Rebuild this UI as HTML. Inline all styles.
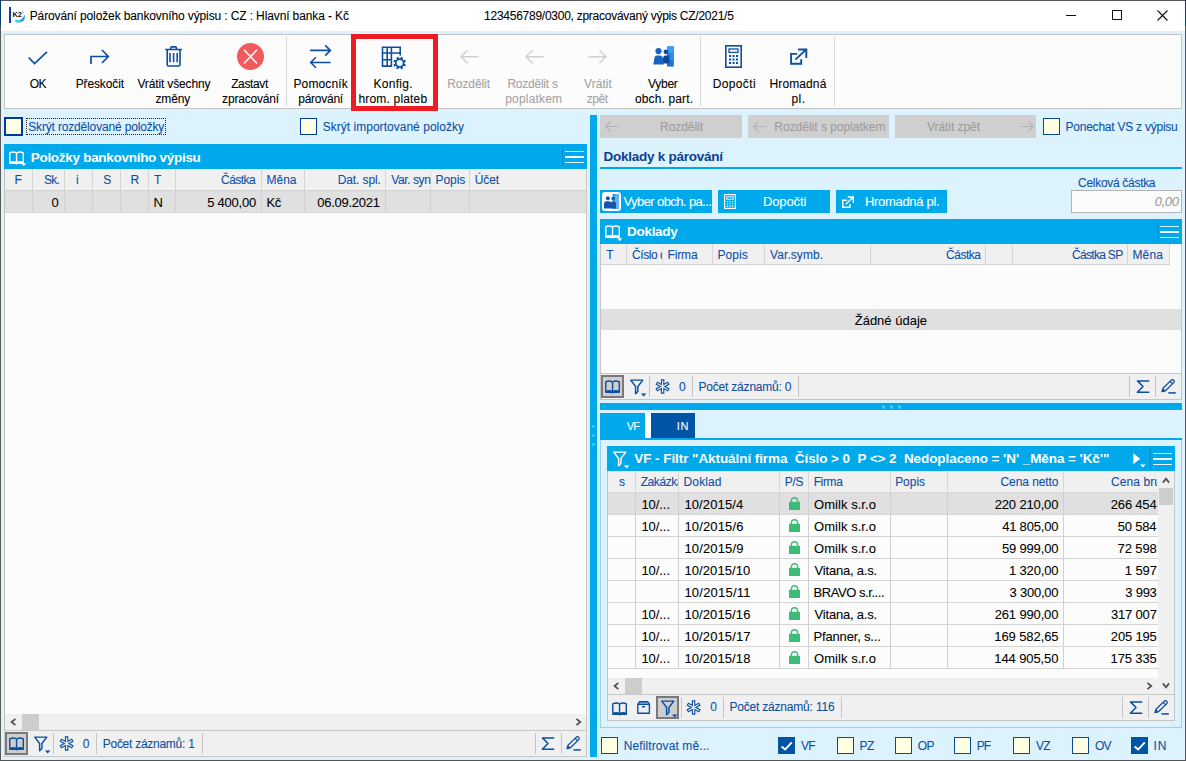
<!DOCTYPE html>
<html lang="cs"><head><meta charset="utf-8"><title>Párování položek bankovního výpisu</title>
<style>
*{box-sizing:border-box;margin:0;padding:0}
html,body{width:1186px;height:761px;overflow:hidden;background:#dcf3fd;font-family:"Liberation Sans",sans-serif;font-size:12px;color:#000}
.a{position:absolute}
.t{position:absolute;white-space:nowrap;-webkit-text-stroke:0.08px currentColor}
.nv{color:#1b3c98}
.wh{color:#fff}
.dis{color:#a3a3a3}
svg{position:absolute;overflow:visible}
</style></head><body>
<!-- title bar -->
<div class="a" style="left:0px;top:0px;width:1186px;height:31px;background:#fff;"></div>
<div class="a" style="left:9px;top:7px;width:2px;height:16px;background:#0c40a0;"></div>
<svg style="left:12px;top:8px" width="14" height="15" viewBox="0 0 14 15"><path d="M3 11.5 Q8 13.5 11 9.5 L12.8 6.5 Q13.6 10 11.6 12.8 Q8.5 15.5 4.6 14.2 Z" fill="#2a9cec"/><path d="M2.6 12.8 Q6.5 13 9.6 11 Q8.6 14.6 4.6 14.4 Z" fill="#35e0d2"/><path d="M10 1.2 L11.6 4.6 L11 5.6Z" fill="#4a7de0"/><text x="0.4" y="9.4" font-size="6.4" font-weight="bold" font-family="Liberation Sans,sans-serif" fill="#111" textLength="9.4" lengthAdjust="spacingAndGlyphs">K2</text></svg>
<div class="t" style="top:9.00px;font-size:12.0px;line-height:14px;letter-spacing:-0.121px;left:29.74px;">Párování položek bankovního výpisu : CZ : Hlavní banka - Kč</div>
<div class="t" style="top:9.00px;font-size:12.0px;line-height:14px;letter-spacing:-0.259px;left:484.10px;">123456789/0300, zpracovávaný výpis CZ/2021/5</div>
<div class="a" style="left:1066px;top:15px;width:10px;height:1px;background:#111;"></div>
<div class="a" style="left:1112px;top:10px;width:10px;height:10px;border:1px solid #111;"></div>
<svg style="left:1157px;top:10px" width="11" height="11" viewBox="0 0 11 11"><path d="M0.5 0.5 L10.5 10.5 M10.5 0.5 L0.5 10.5" stroke="#111" stroke-width="1.1" fill="none"/></svg>
<!-- toolbar -->
<div class="a" style="left:4px;top:34px;width:1178px;height:75px;background:#fcfcfc;border:1px solid #c4c4c4;"></div>
<div class="a" style="left:286px;top:37px;width:1px;height:69px;background:#d8d8d8;"></div>
<div class="a" style="left:700px;top:37px;width:1px;height:69px;background:#d8d8d8;"></div>
<div class="a" style="left:834px;top:37px;width:1px;height:69px;background:#d8d8d8;"></div>
<div class="t" style="top:77.00px;font-size:12.0px;line-height:14px;letter-spacing:-0.800px;left:29.86px;">OK</div>
<div class="t" style="top:77.00px;font-size:12.0px;line-height:14px;letter-spacing:-0.120px;left:75.64px;">Přeskočit</div>
<div class="t" style="top:77.00px;font-size:12.0px;line-height:14px;letter-spacing:-0.142px;left:137.40px;">Vrátit všechny</div>
<div class="t" style="top:92.00px;font-size:12.0px;line-height:14px;letter-spacing:-0.165px;left:155.52px;">změny</div>
<div class="t" style="top:77.00px;font-size:12.0px;line-height:14px;letter-spacing:-0.373px;left:231.14px;">Zastavt</div>
<div class="t" style="top:92.00px;font-size:12.0px;line-height:14px;letter-spacing:-0.200px;left:222.12px;">zpracování</div>
<div class="t" style="top:77.00px;font-size:12.0px;line-height:14px;letter-spacing:0.137px;left:293.44px;">Pomocník</div>
<div class="t" style="top:92.00px;font-size:12.0px;line-height:14px;letter-spacing:-0.251px;left:298.28px;">párování</div>
<div class="t" style="top:77.00px;font-size:12.0px;line-height:14px;letter-spacing:0.293px;left:373.44px;">Konfig.</div>
<div class="t" style="top:92.00px;font-size:12.0px;line-height:14px;letter-spacing:0.185px;left:358.42px;">hrom. plateb</div>
<div class="t dis" style="top:77.00px;font-size:12.0px;line-height:14px;letter-spacing:-0.080px;left:447.24px;">Rozdělit</div>
<div class="t dis" style="top:77.00px;font-size:12.0px;line-height:14px;letter-spacing:-0.244px;left:507.44px;">Rozdělit s</div>
<div class="t dis" style="top:92.00px;font-size:12.0px;line-height:14px;letter-spacing:0.177px;left:505.28px;">poplatkem</div>
<div class="t dis" style="top:77.00px;font-size:12.0px;line-height:14px;letter-spacing:0.072px;left:584.00px;">Vrátit</div>
<div class="t dis" style="top:92.00px;font-size:12.0px;line-height:14px;letter-spacing:-0.480px;left:586.82px;">zpět</div>
<div class="t" style="top:77.00px;font-size:12.0px;line-height:14px;letter-spacing:-0.280px;left:648.00px;">Vyber</div>
<div class="t" style="top:92.00px;font-size:12.0px;line-height:14px;letter-spacing:0.146px;left:634.92px;">obch. part.</div>
<div class="t" style="top:77.00px;font-size:12.0px;line-height:14px;letter-spacing:0.377px;left:712.64px;">Dopočti</div>
<div class="t" style="top:77.00px;font-size:12.0px;line-height:14px;letter-spacing:0.109px;left:769.54px;">Hromadná</div>
<div class="t" style="top:92.00px;font-size:12.0px;line-height:14px;letter-spacing:0.440px;left:791.48px;">pl.</div>
<div class="a" style="left:351px;top:34px;width:87px;height:77px;border:5px solid #ed1c24;"></div>
<svg style="left:28px;top:51px" width="20" height="15" viewBox="0 0 20 15"><path d="M0.7 6.5 L6.5 12.6 L19 0.8" stroke="#0b4ea2" stroke-width="1.7" fill="none"/></svg>
<svg style="left:90px;top:49px" width="20" height="16" viewBox="0 0 20 16"><path d="M1 15 V7.5 H18 M12 1 L18.3 7.5 L12 14" stroke="#0b4ea2" stroke-width="1.7" fill="none"/></svg>
<svg style="left:165px;top:46px" width="17" height="21" viewBox="0 0 17 21"><path d="M0.2 3.5 H17 M5.8 3.4 V1.9 Q5.8 0.9 6.8 0.9 H10.4 Q11.4 0.9 11.4 1.9 V3.4 M2.2 3.5 V18.6 Q2.2 20 3.6 20 H13.6 Q15 20 15 18.6 V3.5 M5 7 V16.2 M8.6 7 V16.2 M12.2 7 V16.2" stroke="#0b4ea2" stroke-width="1.6" fill="none"/></svg>
<svg style="left:237px;top:43px" width="27" height="27" viewBox="0 0 27 27"><circle cx="13.5" cy="13.5" r="13.5" fill="#f15a5c"/><path d="M7 6.8 L20 20.4 M20 6.8 L7 20.4" stroke="#fff" stroke-width="1.5" fill="none"/></svg>
<svg style="left:310px;top:45px" width="22" height="23" viewBox="0 0 22 23"><path d="M0.2 5.4 H20.2 M15.2 0.4 L20.4 5.4 L15.2 10.6 M20.6 17.5 H0.9 M5.9 12.3 L0.7 17.5 L5.9 22.7" stroke="#0b4ea2" stroke-width="1.6" fill="none"/></svg>
<svg style="left:381px;top:45px" width="26" height="25" viewBox="0 0 26 25"><path d="M0.7 2.3 H20 M1.5 1.5 V21.9 M6.2 2.3 V21 M10.4 2.3 V21.9 M19.2 1.5 V10.4 M0.7 8 H20 M0.7 14.7 H11 M0.7 21.1 H11.2" stroke="#0b4ea2" stroke-width="1.6" fill="none"/><circle cx="18.7" cy="18.1" r="5.4" fill="#fcfcfc"/><circle cx="18.7" cy="18.1" r="3.9" stroke="#0b4ea2" stroke-width="1.7" fill="#fcfcfc"/><path d="M22.77 19.78 L24.52 20.51 M20.38 22.17 L21.11 23.92 M17.02 22.17 L16.29 23.92 M14.63 19.78 L12.88 20.51 M14.63 16.42 L12.88 15.69 M17.02 14.03 L16.29 12.28 M20.38 14.03 L21.11 12.28 M22.77 16.42 L24.52 15.69" stroke="#0b4ea2" stroke-width="2.3" fill="none"/></svg>
<svg style="left:459.5px;top:50px" width="19" height="14" viewBox="0 0 19 14"><path d="M18.5 6.8 H1 M7.6 0.3 L1 6.8 L7.6 13.3" stroke="#d0d0d0" stroke-width="1.4" fill="none"/></svg>
<svg style="left:524.5px;top:50px" width="19" height="14" viewBox="0 0 19 14"><path d="M18.5 6.8 H1 M7.6 0.3 L1 6.8 L7.6 13.3" stroke="#d0d0d0" stroke-width="1.4" fill="none"/></svg>
<svg style="left:588px;top:50px" width="19" height="14" viewBox="0 0 19 14"><path d="M0.5 6.8 H18 M11.4 0.3 L18 6.8 L11.4 13.3" stroke="#d0d0d0" stroke-width="1.4" fill="none"/></svg>
<div class="a" style="left:650px;top:43px;width:27px;height:27px;background:#fff;border-radius:4px;"></div>
<svg style="left:653px;top:46px" width="21" height="21" viewBox="0 0 21 21"><rect x="14" y="0.4" width="6.8" height="20.2" fill="#1b74d8"/><rect x="14" y="0.4" width="6.8" height="7" fill="#3e9df3"/><rect x="17.4" y="7.4" width="3.4" height="6.6" fill="#2f8eea"/><circle cx="12.9" cy="5.8" r="2.4" fill="#0d47a1"/><path d="M9.4 17.6 L10.2 11.4 Q10.5 9.6 12 9.6 H14 Q15.6 9.6 15.9 11.4 L16.6 17.6 Z" fill="#0d47a1"/><circle cx="5.5" cy="5.1" r="3.1" fill="#1763c4"/><path d="M0.3 18.5 L1.5 11.6 Q1.9 9.6 4 9.6 H7.2 Q9.3 9.6 9.7 11.6 L10.8 18.5 Z" fill="#1763c4"/></svg>
<svg style="left:725px;top:45px" width="17" height="23" viewBox="0 0 17 23"><rect x="0.8" y="0.8" width="15.4" height="21.4" stroke="#0b4ea2" stroke-width="1.6" fill="none"/><rect x="4" y="4" width="9" height="3.4" stroke="#0b4ea2" stroke-width="1.3" fill="none"/><path d="M4 11 H6 M7.5 11 H9.5 M11 11 H13 M4 14.5 H6 M7.5 14.5 H9.5 M11 14.5 H13 M4 18 H6 M7.5 18 H9.5 M11 18 H13" stroke="#0b4ea2" stroke-width="1.8" fill="none"/></svg>
<svg style="left:790px;top:48px" width="18" height="17" viewBox="0 0 18 17"><path d="M7.2 5.9 H1.1 V15.8 H11.2 V11.3 M5.4 11.6 L16 1.6 M8 1.5 H16.3 V10" stroke="#0b4ea2" stroke-width="1.9" fill="none"/></svg>
<!-- left pane -->
<div class="a" style="left:4px;top:117px;width:19px;height:19px;background:#ffffe1;border:2px solid #003c96;"></div>
<div class="t" style="top:120.00px;font-size:12.0px;line-height:14px;letter-spacing:-0.165px;left:28.26px;color:#0f4ea6;">Skrýt rozdělované položky</div>
<div class="a" style="left:26px;top:118px;width:140px;height:17px;border:1px dotted #222;"></div>
<div class="a" style="left:300px;top:118px;width:17px;height:17px;background:#ffffe1;border:1px solid #003c96;"></div>
<div class="t" style="top:120.00px;font-size:12.0px;line-height:14px;letter-spacing:0.027px;left:322.66px;color:#0f4ea6;">Skrýt importované položky</div>
<div class="a" style="left:4px;top:144px;width:583px;height:25px;background:#00a9ec;"></div>
<svg style="left:9px;top:150.5px" width="16" height="14" viewBox="0 0 16 14"><path d="M0.8 1.9 Q4.2 0.1 7.55 2 Q10.9 0.1 14.3 1.9 V12.3 H0.8 Z M7.55 2 V13.5 M0.8 12 Q4.2 9.6 7.55 12 Q10.9 9.6 14.3 12" stroke="#fff" stroke-width="1.4" fill="none" stroke-linejoin="round"/></svg>
<svg style="left:21px;top:163px" width="6" height="4" viewBox="0 0 6 4"><path d="M0.3 0.3 H5.3 L2.8 3.2Z" fill="#fff"/></svg>
<div class="t" style="top:150.00px;font-size:13.5px;line-height:16px;letter-spacing:-0.287px;left:30.72px;color:#fff;font-weight:bold;-webkit-text-stroke:0;">Položky bankovního výpisu</div>
<div class="a" style="left:562px;top:146px;width:1px;height:21px;background:#0090cc;"></div>
<div class="a" style="left:565px;top:151px;width:19px;height:1.45px;background:rgba(255,255,255,0.82);"></div>
<div class="a" style="left:565px;top:156.2px;width:19px;height:1.45px;background:rgba(255,255,255,0.97);"></div>
<div class="a" style="left:565px;top:161.6px;width:19px;height:1.45px;background:rgba(255,255,255,0.92);"></div>
<div class="a" style="left:4px;top:169px;width:583px;height:562px;background:#fcfcfc;border-left:1px solid #c0c0c0;border-right:1px solid #c8c8c8;"></div>
<div class="a" style="left:5px;top:169px;width:581px;height:21px;background:#f0f0f0;"></div>
<div class="a" style="left:5px;top:190px;width:581px;height:1px;background:#d2d2d2;"></div>
<div class="a" style="left:5px;top:191px;width:581px;height:21px;background:#e0e0e0;"></div>
<div class="a" style="left:5px;top:212px;width:581px;height:1px;background:#d6d6d6;"></div>
<div class="a" style="left:32px;top:169px;width:1px;height:21px;background:#d6d6d6;"></div>
<div class="a" style="left:32px;top:191px;width:1px;height:21px;background:#d0d0d0;"></div>
<div class="a" style="left:64px;top:169px;width:1px;height:21px;background:#d6d6d6;"></div>
<div class="a" style="left:64px;top:191px;width:1px;height:21px;background:#d0d0d0;"></div>
<div class="a" style="left:92px;top:169px;width:1px;height:21px;background:#d6d6d6;"></div>
<div class="a" style="left:92px;top:191px;width:1px;height:21px;background:#d0d0d0;"></div>
<div class="a" style="left:120px;top:169px;width:1px;height:21px;background:#d6d6d6;"></div>
<div class="a" style="left:120px;top:191px;width:1px;height:21px;background:#d0d0d0;"></div>
<div class="a" style="left:148px;top:169px;width:1px;height:21px;background:#d6d6d6;"></div>
<div class="a" style="left:148px;top:191px;width:1px;height:21px;background:#d0d0d0;"></div>
<div class="a" style="left:175px;top:169px;width:1px;height:21px;background:#d6d6d6;"></div>
<div class="a" style="left:175px;top:191px;width:1px;height:21px;background:#d0d0d0;"></div>
<div class="a" style="left:261px;top:169px;width:1px;height:21px;background:#d6d6d6;"></div>
<div class="a" style="left:261px;top:191px;width:1px;height:21px;background:#d0d0d0;"></div>
<div class="a" style="left:304px;top:169px;width:1px;height:21px;background:#d6d6d6;"></div>
<div class="a" style="left:304px;top:191px;width:1px;height:21px;background:#d0d0d0;"></div>
<div class="a" style="left:385px;top:169px;width:1px;height:21px;background:#d6d6d6;"></div>
<div class="a" style="left:385px;top:191px;width:1px;height:21px;background:#d0d0d0;"></div>
<div class="a" style="left:469px;top:169px;width:1px;height:21px;background:#d6d6d6;"></div>
<div class="a" style="left:469px;top:191px;width:1px;height:21px;background:#d0d0d0;"></div>
<div class="a" style="left:430px;top:171px;width:1px;height:19px;background:#dcdcdc;"></div>
<div class="a" style="left:430px;top:191px;width:1px;height:21px;background:#d0d0d0;"></div>
<div class="t" style="top:173.00px;font-size:12.0px;line-height:14px;left:14.44px;color:#0f4ea6;">F</div>
<div class="t" style="top:173.00px;font-size:12.0px;line-height:14px;letter-spacing:-0.710px;left:43.96px;color:#0f4ea6;">Sk.</div>
<div class="t" style="top:173.00px;font-size:12.0px;line-height:14px;left:76.12px;color:#0f4ea6;">i</div>
<div class="t" style="top:173.00px;font-size:12.0px;line-height:14px;left:103.16px;color:#0f4ea6;">S</div>
<div class="t" style="top:173.00px;font-size:12.0px;line-height:14px;left:130.54px;color:#0f4ea6;">R</div>
<div class="t" style="top:173.00px;font-size:12.0px;line-height:14px;left:153.96px;color:#0f4ea6;">T</div>
<div class="t" style="top:173.00px;font-size:12.0px;line-height:14px;letter-spacing:-0.536px;left:221.00px;color:#0f4ea6;">Částka</div>
<div class="t" style="top:173.00px;font-size:12.0px;line-height:14px;letter-spacing:-0.033px;left:266.54px;color:#0f4ea6;">Měna</div>
<div class="t" style="top:173.00px;font-size:12.0px;line-height:14px;letter-spacing:-0.112px;left:337.74px;color:#0f4ea6;">Dat. spl.</div>
<div class="t" style="top:173.00px;font-size:12.0px;line-height:14px;letter-spacing:-0.055px;left:435.54px;color:#0f4ea6;">Popis</div>
<div class="t" style="top:173.00px;font-size:12.0px;line-height:14px;letter-spacing:-0.120px;left:474.80px;color:#0f4ea6;">Účet</div>
<div class="a" style="left:386px;top:169px;width:45px;height:21px;overflow:hidden">
<div class="t" style="top:4.00px;font-size:12.0px;line-height:14px;letter-spacing:-0.394px;left:5.20px;color:#0f4ea6;">Var. syn</div>
</div>
<div class="t" style="top:195.00px;font-size:13.0px;line-height:15px;left:51.45px;">0</div>
<div class="t" style="top:195.00px;font-size:13.0px;line-height:15px;left:153.46px;">N</div>
<div class="t" style="top:195.00px;font-size:13.0px;line-height:15px;letter-spacing:-0.228px;left:207.18px;">5 400,00</div>
<div class="t" style="top:195.00px;font-size:13.0px;line-height:15px;letter-spacing:-0.480px;left:266.46px;">Kč</div>
<div class="t" style="top:195.00px;font-size:13.0px;line-height:15px;letter-spacing:-0.281px;left:317.35px;">06.09.2021</div>
<div class="a" style="left:5px;top:714px;width:581px;height:16px;background:#f0f0f0;"></div>
<div class="a" style="left:22px;top:714px;width:17px;height:16px;background:#cdcdcd;"></div>
<svg style="left:9.5px;top:718px" width="8" height="8" viewBox="0 0 8 8"><path d="M5.4 0.9 L1.5 4 L5.4 7.1" stroke="#505050" stroke-width="1.7" fill="none"/></svg>
<svg style="left:574.5px;top:718px" width="8" height="8" viewBox="0 0 8 8"><path d="M1.4 0.9 L5.3 4 L1.4 7.1" stroke="#505050" stroke-width="1.7" fill="none"/></svg>
<div class="a" style="left:5px;top:730px;width:581px;height:1px;background:#c8c8c8;"></div>
<div class="a" style="left:4px;top:731px;width:583px;height:26px;background:#f0f0f0;border:1px solid #c8c8c8;border-top:none;"></div>
<div class="a" style="left:5px;top:732px;width:23px;height:23px;background:#cecece;border:2px solid #797979;"></div>
<svg style="left:9px;top:737px" width="16" height="14" viewBox="0 0 16 14"><path d="M0.8 1.9 Q4.2 0.1 7.55 2 Q10.9 0.1 14.3 1.9 V12.3 H0.8 Z M7.55 2 V13.5 M0.8 12 Q4.2 9.6 7.55 12 Q10.9 9.6 14.3 12" stroke="#0b4ea2" stroke-width="1.4" fill="none" stroke-linejoin="round"/></svg>
<svg style="left:34px;top:736px" width="17" height="18" viewBox="0 0 17 18"><path d="M0.8 1.1 H12.8 L7.9 7.5 V12.6 L5.6 14.8 V7.5 Z" stroke="#0b4ea2" stroke-width="1.45" fill="none" stroke-linejoin="round"/><path d="M10.9 14.4 H16.4 L13.65 17.6 Z" fill="#0b4ea2"/></svg>
<div class="a" style="left:53px;top:733px;width:1px;height:21px;background:#c6c6c6;"></div>
<svg style="left:59px;top:736px" width="15" height="15" viewBox="0 0 15 15"><path d="M7.60 0.30 L7.60 14.70 M13.84 3.90 L1.36 11.10 M13.84 11.10 L1.36 3.90" stroke="#0b4ea2" stroke-width="3.5" fill="none"/><path d="M7.60 1.40 L7.60 13.60 M12.88 4.45 L2.32 10.55 M12.88 10.55 L2.32 4.45" stroke="#f0f0f0" stroke-width="1.3" fill="none"/></svg>
<div class="t" style="top:737.00px;font-size:12.0px;line-height:14px;left:82.78px;color:#0b4ea2;">0</div>
<div class="a" style="left:96px;top:733px;width:1px;height:21px;background:#c6c6c6;"></div>
<div class="t" style="top:737.00px;font-size:12.0px;line-height:14px;letter-spacing:-0.264px;left:102.74px;color:#0b4ea2;">Počet záznamů: 1</div>
<div class="a" style="left:202px;top:733px;width:1px;height:21px;background:#c6c6c6;"></div>
<div class="a" style="left:535px;top:733px;width:1px;height:21px;background:#c6c6c6;"></div>
<svg style="left:541px;top:736px" width="13" height="15" viewBox="0 0 13 15"><path d="M12.7 1.9 H1.4 L7 7.55 L1.4 13.2 H12.7" stroke="#0b4ea2" stroke-width="1.5" fill="none" stroke-linejoin="round" stroke-linecap="round"/></svg>
<div class="a" style="left:561px;top:733px;width:1px;height:21px;background:#c6c6c6;"></div>
<svg style="left:566px;top:736px" width="16" height="15" viewBox="0 0 16 15"><path d="M1 12.6 L2 9.2 L10.6 0.9 Q11.6 0.3 12.7 1.3 Q13.7 2.4 13 3.4 L4.4 11.8 Z M9.2 2.4 L11.6 4.8" stroke="#0b4ea2" stroke-width="1.3" fill="none" stroke-linejoin="round"/><path d="M2 9.2 L4.4 11.8 L1 12.6" fill="#0b4ea2"/><path d="M7.4 13.9 H14.8" stroke="#0b4ea2" stroke-width="1.5"/></svg>
<div class="a" style="left:590px;top:115px;width:7px;height:642px;background:#00a9ec;"></div>
<div class="a" style="left:591.8px;top:424.5px;width:3.6px;height:3.4px;background:#48c9fb;border-radius:50%;"></div>
<div class="a" style="left:591.8px;top:433.5px;width:3.6px;height:3.4px;background:#48c9fb;border-radius:50%;"></div>
<div class="a" style="left:591.8px;top:442.5px;width:3.6px;height:3.4px;background:#48c9fb;border-radius:50%;"></div>
<!-- right pane top -->
<div class="a" style="left:600px;top:115px;width:142px;height:23px;background:#cfcfcf;"></div>
<div class="a" style="left:748px;top:115px;width:141px;height:23px;background:#cfcfcf;"></div>
<div class="a" style="left:895px;top:115px;width:141px;height:23px;background:#cfcfcf;"></div>
<svg style="left:605px;top:121px" width="14" height="11" viewBox="0 0 14 11"><path d="M13.5 5.5 H0.8 M5.5 0.5 L0.8 5.5 L5.5 10.5" stroke="#b4b4b4" stroke-width="1.1" fill="none"/></svg>
<svg style="left:753px;top:121px" width="14" height="11" viewBox="0 0 14 11"><path d="M13.5 5.5 H0.8 M5.5 0.5 L0.8 5.5 L5.5 10.5" stroke="#b4b4b4" stroke-width="1.1" fill="none"/></svg>
<svg style="left:1020px;top:121px" width="14" height="11" viewBox="0 0 14 11"><path d="M0.5 5.5 H13.2 M8.5 0.5 L13.2 5.5 L8.5 10.5" stroke="#b4b4b4" stroke-width="1.1" fill="none"/></svg>
<div class="t" style="top:120.00px;font-size:12.0px;line-height:14px;letter-spacing:-0.051px;left:660.04px;color:#9c9c9c;">Rozdělit</div>
<div class="t" style="top:120.00px;font-size:12.0px;line-height:14px;letter-spacing:-0.015px;left:774.34px;color:#9c9c9c;">Rozdělit s poplatkem</div>
<div class="t" style="top:120.00px;font-size:12.0px;line-height:14px;letter-spacing:-0.052px;left:927.00px;color:#9c9c9c;">Vrátit zpět</div>
<div class="a" style="left:1043px;top:118px;width:17px;height:17px;background:#ffffe1;border:1px solid #0a4a9c;"></div>
<div class="t" style="top:120.00px;font-size:12.0px;line-height:14px;letter-spacing:-0.235px;left:1065.54px;color:#0f4ea6;">Ponechat VS z výpisu</div>
<div class="t" style="top:149.00px;font-size:13.5px;line-height:16px;letter-spacing:-0.250px;left:603.42px;color:#0b4096;font-weight:bold;-webkit-text-stroke:0;">Doklady k párování</div>
<div class="a" style="left:600px;top:167px;width:582px;height:2px;background:#00a9ec;"></div>
<div class="a" style="left:600px;top:190px;width:112px;height:23px;background:#00a9ec;"></div>
<div class="a" style="left:718px;top:190px;width:112px;height:23px;background:#00a9ec;"></div>
<div class="a" style="left:836px;top:190px;width:111px;height:23px;background:#00a9ec;"></div>
<div class="a" style="left:602px;top:192px;width:19px;height:19px;background:#fff;border-radius:3px;"></div>
<svg style="left:604px;top:194px" width="15" height="15" viewBox="0 0 15 15"><rect x="8.5" y="0" width="6.5" height="15" fill="#3a96dd"/><rect x="11" y="0" width="4" height="15" fill="#62b4ea"/><circle cx="3.8" cy="4.2" r="2" fill="#1455b0"/><circle cx="9.2" cy="4.6" r="1.8" fill="#1455b0"/><path d="M0 14.5 V9.5 Q0 7.2 2.2 7.2 H5 Q6.6 7.2 7 8.6 Q7.4 7.5 8.8 7.5 H10 Q12 7.5 12 9.5 V14.5 Z" fill="#1455b0"/></svg>
<div class="t" style="top:194.00px;font-size:13.0px;line-height:15px;letter-spacing:-0.591px;left:623.50px;color:#fff;">Vyber obch. pa...</div>
<svg style="left:724px;top:194px" width="12" height="15" viewBox="0 0 12 15"><rect x="0.6" y="0.6" width="10.8" height="13.8" stroke="#fff" stroke-width="1.2" fill="none"/><rect x="2.8" y="2.8" width="6.4" height="2.4" stroke="#fff" stroke-width="0.9" fill="none"/><path d="M2.8 7.5 H4.2 M5.3 7.5 H6.7 M7.8 7.5 H9.2 M2.8 9.8 H4.2 M5.3 9.8 H6.7 M7.8 9.8 H9.2 M2.8 12.1 H4.2 M5.3 12.1 H6.7 M7.8 12.1 H9.2" stroke="#fff" stroke-width="1.1" fill="none"/></svg>
<div class="t" style="top:194.00px;font-size:13.0px;line-height:15px;letter-spacing:-0.114px;left:762.96px;color:#fff;">Dopočti</div>
<svg style="left:842px;top:196px" width="12" height="12" viewBox="0 0 12 12"><path d="M5 4.3 H0.8 V11.2 H7.9 V8 M3.8 8.2 L11 1.3 M5.6 1 H11.3 V6.8" stroke="#fff" stroke-width="1.4" fill="none"/></svg>
<div class="t" style="top:194.00px;font-size:13.0px;line-height:15px;letter-spacing:-0.305px;left:864.96px;color:#fff;">Hromadná pl.</div>
<div class="t" style="top:176.00px;font-size:12.0px;line-height:14px;letter-spacing:-0.302px;left:1078.10px;color:#0f4ea6;">Celková částka</div>
<div class="a" style="left:1071px;top:190px;width:111px;height:23px;background:#fcfcfc;border:1px solid #b4b4b4;"></div>
<div class="t" style="top:194.00px;font-size:13.0px;line-height:15px;letter-spacing:-0.367px;left:1154.78px;color:#9a9a9a;font-style:italic;">0,00</div>
<!-- Doklady grid -->
<div class="a" style="left:600px;top:219px;width:582px;height:25px;background:#00a9ec;"></div>
<svg style="left:605px;top:225.3px" width="16" height="14" viewBox="0 0 16 14"><path d="M0.8 1.9 Q4.2 0.1 7.55 2 Q10.9 0.1 14.3 1.9 V12.3 H0.8 Z M7.55 2 V13.5 M0.8 12 Q4.2 9.6 7.55 12 Q10.9 9.6 14.3 12" stroke="#fff" stroke-width="1.4" fill="none" stroke-linejoin="round"/></svg>
<svg style="left:617px;top:238px" width="6" height="4" viewBox="0 0 6 4"><path d="M0.3 0.3 H5.3 L2.8 3.2Z" fill="#fff"/></svg>
<div class="t" style="top:224.00px;font-size:13.5px;line-height:16px;letter-spacing:-0.290px;left:627.02px;color:#fff;font-weight:bold;-webkit-text-stroke:0;">Doklady</div>
<div class="a" style="left:1157px;top:221px;width:1px;height:21px;background:#0090cc;"></div>
<div class="a" style="left:1160px;top:226px;width:19px;height:1.45px;background:rgba(255,255,255,0.82);"></div>
<div class="a" style="left:1160px;top:231.2px;width:19px;height:1.45px;background:rgba(255,255,255,0.97);"></div>
<div class="a" style="left:1160px;top:236.6px;width:19px;height:1.45px;background:rgba(255,255,255,0.92);"></div>
<div class="a" style="left:600px;top:244px;width:582px;height:156px;background:#fcfcfc;border:1px solid #c4c4c4;border-top:none;"></div>
<div class="a" style="left:601px;top:244px;width:569px;height:20px;background:#f0f0f0;"></div>
<div class="a" style="left:601px;top:264px;width:569px;height:1px;background:#d2d2d2;"></div>
<div class="a" style="left:626px;top:244px;width:1px;height:21px;background:#d6d6d6;"></div>
<div class="a" style="left:712px;top:244px;width:1px;height:21px;background:#d6d6d6;"></div>
<div class="a" style="left:764px;top:244px;width:1px;height:21px;background:#d6d6d6;"></div>
<div class="a" style="left:870px;top:244px;width:1px;height:21px;background:#d6d6d6;"></div>
<div class="a" style="left:985px;top:244px;width:1px;height:21px;background:#d6d6d6;"></div>
<div class="a" style="left:1012px;top:244px;width:1px;height:21px;background:#d6d6d6;"></div>
<div class="a" style="left:1127px;top:244px;width:1px;height:21px;background:#d6d6d6;"></div>
<div class="a" style="left:1169px;top:244px;width:1px;height:21px;background:#d6d6d6;"></div>
<div class="a" style="left:662px;top:246px;width:1px;height:19px;background:#dcdcdc;"></div>
<div class="t" style="top:248.00px;font-size:12.0px;line-height:14px;left:606.36px;color:#0f4ea6;">T</div>
<div class="t" style="top:248.00px;font-size:12.0px;line-height:14px;letter-spacing:-0.115px;left:667.44px;color:#0f4ea6;">Firma</div>
<div class="t" style="top:248.00px;font-size:12.0px;line-height:14px;letter-spacing:0.070px;left:717.44px;color:#0f4ea6;">Popis</div>
<div class="t" style="top:248.00px;font-size:12.0px;line-height:14px;letter-spacing:0.060px;left:770.10px;color:#0f4ea6;">Var.symb.</div>
<div class="t" style="top:248.00px;font-size:12.0px;line-height:14px;letter-spacing:-0.516px;left:946.10px;color:#0f4ea6;">Částka</div>
<div class="t" style="top:248.00px;font-size:12.0px;line-height:14px;letter-spacing:-0.705px;left:1072.10px;color:#0f4ea6;">Částka SP</div>
<div class="t" style="top:248.00px;font-size:12.0px;line-height:14px;letter-spacing:0.167px;left:1132.44px;color:#0f4ea6;">Měna</div>
<div class="a" style="left:627px;top:244px;width:35px;height:20px;overflow:hidden">
<div class="t" style="top:4.00px;font-size:12.0px;line-height:14px;letter-spacing:-0.433px;left:5.00px;color:#0f4ea6;">Číslo d</div>
</div>
<div class="a" style="left:601px;top:309px;width:580px;height:21px;background:#e0e0e0;"></div>
<div class="t" style="top:313.00px;font-size:13.0px;line-height:15px;letter-spacing:0.003px;left:854.71px;">Žádné údaje</div>
<div class="a" style="left:601px;top:373px;width:580px;height:1px;background:#c8c8c8;"></div>
<div class="a" style="left:601px;top:374px;width:580px;height:25px;background:#f0f0f0;"></div>
<div class="a" style="left:601px;top:375px;width:23px;height:23px;background:#cecece;border:2px solid #797979;"></div>
<svg style="left:605px;top:380px" width="16" height="14" viewBox="0 0 16 14"><path d="M0.8 1.9 Q4.2 0.1 7.55 2 Q10.9 0.1 14.3 1.9 V12.3 H0.8 Z M7.55 2 V13.5 M0.8 12 Q4.2 9.6 7.55 12 Q10.9 9.6 14.3 12" stroke="#0b4ea2" stroke-width="1.4" fill="none" stroke-linejoin="round"/></svg>
<svg style="left:630px;top:378.8px" width="17" height="18" viewBox="0 0 17 18"><path d="M0.8 1.1 H12.8 L7.9 7.5 V12.6 L5.6 14.8 V7.5 Z" stroke="#0b4ea2" stroke-width="1.45" fill="none" stroke-linejoin="round"/><path d="M10.9 14.4 H16.4 L13.65 17.6 Z" fill="#0b4ea2"/></svg>
<div class="a" style="left:649px;top:376px;width:1px;height:21px;background:#c6c6c6;"></div>
<svg style="left:655px;top:379px" width="15" height="15" viewBox="0 0 15 15"><path d="M7.60 0.30 L7.60 14.70 M13.84 3.90 L1.36 11.10 M13.84 11.10 L1.36 3.90" stroke="#0b4ea2" stroke-width="3.5" fill="none"/><path d="M7.60 1.40 L7.60 13.60 M12.88 4.45 L2.32 10.55 M12.88 10.55 L2.32 4.45" stroke="#f0f0f0" stroke-width="1.3" fill="none"/></svg>
<div class="t" style="top:380.00px;font-size:12.0px;line-height:14px;left:678.88px;color:#0b4ea2;">0</div>
<div class="a" style="left:692px;top:376px;width:1px;height:21px;background:#c6c6c6;"></div>
<div class="t" style="top:380.00px;font-size:12.0px;line-height:14px;letter-spacing:-0.205px;left:698.54px;color:#0b4ea2;">Počet záznamů: 0</div>
<div class="a" style="left:798px;top:376px;width:1px;height:21px;background:#c6c6c6;"></div>
<div class="a" style="left:1129px;top:376px;width:1px;height:21px;background:#c6c6c6;"></div>
<svg style="left:1136px;top:379px" width="13" height="15" viewBox="0 0 13 15"><path d="M12.7 1.9 H1.4 L7 7.55 L1.4 13.2 H12.7" stroke="#0b4ea2" stroke-width="1.5" fill="none" stroke-linejoin="round" stroke-linecap="round"/></svg>
<div class="a" style="left:1155px;top:376px;width:1px;height:21px;background:#c6c6c6;"></div>
<svg style="left:1161px;top:379px" width="16" height="15" viewBox="0 0 16 15"><path d="M1 12.6 L2 9.2 L10.6 0.9 Q11.6 0.3 12.7 1.3 Q13.7 2.4 13 3.4 L4.4 11.8 Z M9.2 2.4 L11.6 4.8" stroke="#0b4ea2" stroke-width="1.3" fill="none" stroke-linejoin="round"/><path d="M2 9.2 L4.4 11.8 L1 12.6" fill="#0b4ea2"/><path d="M7.4 13.9 H14.8" stroke="#0b4ea2" stroke-width="1.5"/></svg>
<div class="a" style="left:600px;top:403px;width:582px;height:7px;background:#00a9ec;"></div>
<div class="a" style="left:882px;top:405.2px;width:3.4px;height:3.6px;background:#48c9fb;border-radius:50%;"></div>
<div class="a" style="left:890px;top:405.2px;width:3.4px;height:3.6px;background:#48c9fb;border-radius:50%;"></div>
<div class="a" style="left:898px;top:405.2px;width:3.4px;height:3.6px;background:#48c9fb;border-radius:50%;"></div>
<!-- tabs -->
<div class="a" style="left:600px;top:413px;width:45px;height:25px;background:#00a9ec;"></div>
<div class="a" style="left:645px;top:413px;width:6px;height:25px;background:#fff;"></div>
<div class="a" style="left:651px;top:413px;width:44px;height:25px;background:#0054a6;"></div>
<div class="t" style="top:420.00px;font-size:11.0px;line-height:13px;letter-spacing:-0.800px;left:626.70px;color:#fff;">VF</div>
<div class="t" style="top:420.00px;font-size:11.0px;line-height:13px;letter-spacing:0.800px;left:676.71px;color:#fff;">IN</div>
<div class="a" style="left:600px;top:438px;width:582px;height:2px;background:#00a9ec;"></div>
<div class="a" style="left:600px;top:440px;width:582px;height:288px;border:1px solid #8ad6f7;border-top:none;"></div>
<!-- VF grid -->
<div class="a" style="left:607px;top:446px;width:568px;height:25px;background:#00a9ec;"></div>
<svg style="left:613px;top:450.8px" width="17" height="18" viewBox="0 0 17 18"><path d="M0.8 1.1 H12.8 L7.9 7.5 V12.6 L5.6 14.8 V7.5 Z" stroke="#fff" stroke-width="1.45" fill="none" stroke-linejoin="round"/><path d="M10.9 14.4 H16.4 L13.65 17.6 Z" fill="#fff"/></svg>
<div class="t" style="top:451.00px;font-size:13.5px;line-height:16px;letter-spacing:-0.070px;left:634.33px;color:#fff;font-weight:bold;-webkit-text-stroke:0;">VF - Filtr "Aktuální firma&nbsp; Číslo &gt; 0&nbsp; P &lt;&gt; 2&nbsp; Nedoplaceno = 'N' _Měna = 'Kč'"</div>
<svg style="left:1133px;top:453px" width="13" height="15" viewBox="0 0 13 15"><path d="M0.3 0.2 L7.2 5.7 L0.3 11.2 Z" fill="#fff"/><path d="M7.2 11.4 H12.6 L9.9 14.4 Z" fill="#fff"/></svg>
<div class="a" style="left:1150px;top:448px;width:1px;height:21px;background:#0090cc;"></div>
<div class="a" style="left:1153px;top:453px;width:19px;height:1.45px;background:rgba(255,255,255,0.82);"></div>
<div class="a" style="left:1153px;top:458.2px;width:19px;height:1.45px;background:rgba(255,255,255,0.97);"></div>
<div class="a" style="left:1153px;top:463.6px;width:19px;height:1.45px;background:rgba(255,255,255,0.92);"></div>
<div class="a" style="left:607px;top:471px;width:568px;height:250px;background:#fcfcfc;border:1px solid #c4c4c4;border-top:none;"></div>
<div class="a" style="left:608px;top:471px;width:550px;height:21px;background:#f0f0f0;"></div>
<div class="a" style="left:608px;top:492px;width:550px;height:1px;background:#d8d8d8;"></div>
<div class="a" style="left:608px;top:493px;width:550px;height:21px;background:#e0e0e0;"></div>
<div class="a" style="left:608px;top:514px;width:550px;height:1px;background:#d4d4d4;"></div>
<div class="a" style="left:608px;top:536px;width:550px;height:1px;background:#d4d4d4;"></div>
<div class="a" style="left:608px;top:558px;width:550px;height:1px;background:#d4d4d4;"></div>
<div class="a" style="left:608px;top:580px;width:550px;height:1px;background:#d4d4d4;"></div>
<div class="a" style="left:608px;top:602px;width:550px;height:1px;background:#d4d4d4;"></div>
<div class="a" style="left:608px;top:624px;width:550px;height:1px;background:#d4d4d4;"></div>
<div class="a" style="left:608px;top:646px;width:550px;height:1px;background:#d4d4d4;"></div>
<div class="a" style="left:608px;top:668px;width:550px;height:1px;background:#d4d4d4;"></div>
<div class="a" style="left:635px;top:471px;width:1px;height:21px;background:#d6d6d6;"></div>
<div class="a" style="left:635px;top:493px;width:1px;height:176px;background:#d0d0d0;"></div>
<div class="a" style="left:678px;top:471px;width:1px;height:21px;background:#d6d6d6;"></div>
<div class="a" style="left:678px;top:493px;width:1px;height:176px;background:#d0d0d0;"></div>
<div class="a" style="left:779px;top:471px;width:1px;height:21px;background:#d6d6d6;"></div>
<div class="a" style="left:779px;top:493px;width:1px;height:176px;background:#d0d0d0;"></div>
<div class="a" style="left:808px;top:471px;width:1px;height:21px;background:#d6d6d6;"></div>
<div class="a" style="left:808px;top:493px;width:1px;height:176px;background:#d0d0d0;"></div>
<div class="a" style="left:890px;top:471px;width:1px;height:21px;background:#d6d6d6;"></div>
<div class="a" style="left:890px;top:493px;width:1px;height:176px;background:#d0d0d0;"></div>
<div class="a" style="left:947px;top:471px;width:1px;height:21px;background:#d6d6d6;"></div>
<div class="a" style="left:947px;top:493px;width:1px;height:176px;background:#d0d0d0;"></div>
<div class="a" style="left:1063px;top:471px;width:1px;height:21px;background:#d6d6d6;"></div>
<div class="a" style="left:1063px;top:493px;width:1px;height:176px;background:#d0d0d0;"></div>
<div class="t" style="top:475.00px;font-size:12.0px;line-height:14px;left:618.90px;color:#0f4ea6;">s</div>
<div class="t" style="top:475.00px;font-size:12.0px;line-height:14px;letter-spacing:0.132px;left:683.54px;color:#0f4ea6;">Doklad</div>
<div class="t" style="top:475.00px;font-size:12.0px;line-height:14px;letter-spacing:-0.190px;left:784.64px;color:#0f4ea6;">P/S</div>
<div class="t" style="top:475.00px;font-size:12.0px;line-height:14px;letter-spacing:-0.340px;left:813.64px;color:#0f4ea6;">Firma</div>
<div class="t" style="top:475.00px;font-size:12.0px;line-height:14px;letter-spacing:-0.005px;left:895.14px;color:#0f4ea6;">Popis</div>
<div class="t" style="top:475.00px;font-size:12.0px;line-height:14px;letter-spacing:-0.078px;left:1000.50px;color:#0f4ea6;">Cena netto</div>
<div class="a" style="left:636px;top:471px;width:42px;height:21px;overflow:hidden">
<div class="t" style="top:4.00px;font-size:12.0px;line-height:14px;letter-spacing:-0.443px;left:4.74px;color:#0f4ea6;">Zakázka</div>
</div>
<div class="a" style="left:1064px;top:471px;width:93px;height:200px;overflow:hidden">
<div class="t" style="top:4.00px;font-size:12.0px;line-height:14px;letter-spacing:0.078px;left:47.00px;color:#0f4ea6;">Cena brutto</div>
</div>
<div class="t" style="top:497.00px;font-size:13.0px;line-height:15px;letter-spacing:-0.056px;left:641.42px;">10/...</div>
<div class="t" style="top:497.00px;font-size:13.0px;line-height:15px;letter-spacing:0.119px;left:684.42px;">10/2015/4</div>
<svg style="left:789px;top:497px" width="11" height="13" viewBox="0 0 11 13"><path d="M2.4 5.2 V3.6 Q2.4 0.7 5.5 0.7 Q8.6 0.7 8.6 3.6 V5.2" stroke="#3dbb78" stroke-width="1.4" fill="none"/><rect x="0" y="4.8" width="11" height="8.2" fill="#3dbb78"/></svg>
<div class="t" style="top:497.00px;font-size:13.0px;line-height:15px;letter-spacing:0.054px;left:814.01px;">Omilk s.r.o</div>
<div class="t" style="top:497.00px;font-size:13.0px;line-height:15px;letter-spacing:-0.140px;left:994.65px;">220 210,00</div>
<div class="t" style="top:497.00px;font-size:13.0px;line-height:15px;letter-spacing:-0.203px;left:1110.85px;">266 454</div>
<div class="t" style="top:519.00px;font-size:13.0px;line-height:15px;letter-spacing:-0.056px;left:641.42px;">10/...</div>
<div class="t" style="top:519.00px;font-size:13.0px;line-height:15px;letter-spacing:0.143px;left:684.42px;">10/2015/6</div>
<svg style="left:789px;top:519px" width="11" height="13" viewBox="0 0 11 13"><path d="M2.4 5.2 V3.6 Q2.4 0.7 5.5 0.7 Q8.6 0.7 8.6 3.6 V5.2" stroke="#3dbb78" stroke-width="1.4" fill="none"/><rect x="0" y="4.8" width="11" height="8.2" fill="#3dbb78"/></svg>
<div class="t" style="top:519.00px;font-size:13.0px;line-height:15px;letter-spacing:0.054px;left:814.01px;">Omilk s.r.o</div>
<div class="t" style="top:519.00px;font-size:13.0px;line-height:15px;letter-spacing:-0.192px;left:1002.14px;">41 805,00</div>
<div class="t" style="top:519.00px;font-size:13.0px;line-height:15px;letter-spacing:-0.167px;left:1117.68px;">50 584</div>
<div class="t" style="top:541.00px;font-size:13.0px;line-height:15px;letter-spacing:0.151px;left:684.42px;">10/2015/9</div>
<svg style="left:789px;top:541px" width="11" height="13" viewBox="0 0 11 13"><path d="M2.4 5.2 V3.6 Q2.4 0.7 5.5 0.7 Q8.6 0.7 8.6 3.6 V5.2" stroke="#3dbb78" stroke-width="1.4" fill="none"/><rect x="0" y="4.8" width="11" height="8.2" fill="#3dbb78"/></svg>
<div class="t" style="top:541.00px;font-size:13.0px;line-height:15px;letter-spacing:0.054px;left:814.01px;">Omilk s.r.o</div>
<div class="t" style="top:541.00px;font-size:13.0px;line-height:15px;letter-spacing:-0.159px;left:1001.88px;">59 999,00</div>
<div class="t" style="top:541.00px;font-size:13.0px;line-height:15px;letter-spacing:-0.102px;left:1117.55px;">72 598</div>
<div class="t" style="top:563.00px;font-size:13.0px;line-height:15px;letter-spacing:-0.056px;left:641.42px;">10/...</div>
<div class="t" style="top:563.00px;font-size:13.0px;line-height:15px;letter-spacing:0.096px;left:684.42px;">10/2015/10</div>
<svg style="left:789px;top:563px" width="11" height="13" viewBox="0 0 11 13"><path d="M2.4 5.2 V3.6 Q2.4 0.7 5.5 0.7 Q8.6 0.7 8.6 3.6 V5.2" stroke="#3dbb78" stroke-width="1.4" fill="none"/><rect x="0" y="4.8" width="11" height="8.2" fill="#3dbb78"/></svg>
<div class="t" style="top:563.00px;font-size:13.0px;line-height:15px;letter-spacing:-0.212px;left:814.60px;">Vitana, a.s.</div>
<div class="t" style="top:563.00px;font-size:13.0px;line-height:15px;letter-spacing:-0.163px;left:1009.02px;">1 320,00</div>
<div class="t" style="top:563.00px;font-size:13.0px;line-height:15px;letter-spacing:-0.110px;left:1124.83px;">1 597</div>
<div class="t" style="top:585.00px;font-size:13.0px;line-height:15px;letter-spacing:0.219px;left:684.42px;">10/2015/11</div>
<svg style="left:789px;top:585px" width="11" height="13" viewBox="0 0 11 13"><path d="M2.4 5.2 V3.6 Q2.4 0.7 5.5 0.7 Q8.6 0.7 8.6 3.6 V5.2" stroke="#3dbb78" stroke-width="1.4" fill="none"/><rect x="0" y="4.8" width="11" height="8.2" fill="#3dbb78"/></svg>
<div class="t" style="top:585.00px;font-size:13.0px;line-height:15px;letter-spacing:-0.447px;left:813.56px;">BRAVO s.r....</div>
<div class="t" style="top:585.00px;font-size:13.0px;line-height:15px;letter-spacing:-0.237px;left:1009.54px;">3 300,00</div>
<div class="t" style="top:585.00px;font-size:13.0px;line-height:15px;letter-spacing:-0.256px;left:1125.35px;">3 993</div>
<div class="t" style="top:607.00px;font-size:13.0px;line-height:15px;letter-spacing:-0.056px;left:641.42px;">10/...</div>
<div class="t" style="top:607.00px;font-size:13.0px;line-height:15px;letter-spacing:0.103px;left:684.42px;">10/2015/16</div>
<svg style="left:789px;top:607px" width="11" height="13" viewBox="0 0 11 13"><path d="M2.4 5.2 V3.6 Q2.4 0.7 5.5 0.7 Q8.6 0.7 8.6 3.6 V5.2" stroke="#3dbb78" stroke-width="1.4" fill="none"/><rect x="0" y="4.8" width="11" height="8.2" fill="#3dbb78"/></svg>
<div class="t" style="top:607.00px;font-size:13.0px;line-height:15px;letter-spacing:-0.212px;left:814.60px;">Vitana, a.s.</div>
<div class="t" style="top:607.00px;font-size:13.0px;line-height:15px;letter-spacing:-0.140px;left:994.65px;">261 990,00</div>
<div class="t" style="top:607.00px;font-size:13.0px;line-height:15px;letter-spacing:-0.193px;left:1111.05px;">317 007</div>
<div class="t" style="top:629.00px;font-size:13.0px;line-height:15px;letter-spacing:-0.056px;left:641.42px;">10/...</div>
<div class="t" style="top:629.00px;font-size:13.0px;line-height:15px;letter-spacing:0.111px;left:684.42px;">10/2015/17</div>
<svg style="left:789px;top:629px" width="11" height="13" viewBox="0 0 11 13"><path d="M2.4 5.2 V3.6 Q2.4 0.7 5.5 0.7 Q8.6 0.7 8.6 3.6 V5.2" stroke="#3dbb78" stroke-width="1.4" fill="none"/><rect x="0" y="4.8" width="11" height="8.2" fill="#3dbb78"/></svg>
<div class="t" style="top:629.00px;font-size:13.0px;line-height:15px;letter-spacing:-0.176px;left:813.56px;">Pfanner, s...</div>
<div class="t" style="top:629.00px;font-size:13.0px;line-height:15px;letter-spacing:-0.097px;left:994.32px;">169 582,65</div>
<div class="t" style="top:629.00px;font-size:13.0px;line-height:15px;letter-spacing:-0.171px;left:1110.85px;">205 195</div>
<div class="t" style="top:651.00px;font-size:13.0px;line-height:15px;letter-spacing:-0.056px;left:641.42px;">10/...</div>
<div class="t" style="top:651.00px;font-size:13.0px;line-height:15px;letter-spacing:0.103px;left:684.42px;">10/2015/18</div>
<svg style="left:789px;top:651px" width="11" height="13" viewBox="0 0 11 13"><path d="M2.4 5.2 V3.6 Q2.4 0.7 5.5 0.7 Q8.6 0.7 8.6 3.6 V5.2" stroke="#3dbb78" stroke-width="1.4" fill="none"/><rect x="0" y="4.8" width="11" height="8.2" fill="#3dbb78"/></svg>
<div class="t" style="top:651.00px;font-size:13.0px;line-height:15px;letter-spacing:0.054px;left:814.01px;">Omilk s.r.o</div>
<div class="t" style="top:651.00px;font-size:13.0px;line-height:15px;letter-spacing:-0.104px;left:994.32px;">144 905,50</div>
<div class="t" style="top:651.00px;font-size:13.0px;line-height:15px;letter-spacing:-0.117px;left:1110.53px;">175 335</div>
<div class="a" style="left:1158px;top:471px;width:16px;height:223px;background:#f0f0f0;"></div>
<div class="a" style="left:1159px;top:488px;width:14px;height:17px;background:#cdcdcd;"></div>
<svg style="left:1161.6px;top:476.5px" width="8" height="8" viewBox="0 0 8 8"><path d="M0.9 5.6 L4 1.7 L7.1 5.6" stroke="#505050" stroke-width="1.7" fill="none"/></svg>
<svg style="left:1161.6px;top:682px" width="8" height="8" viewBox="0 0 8 8"><path d="M0.9 1.4 L4 5.3 L7.1 1.4" stroke="#505050" stroke-width="1.7" fill="none"/></svg>
<div class="a" style="left:608px;top:678px;width:550px;height:16px;background:#f0f0f0;"></div>
<div class="a" style="left:625px;top:678px;width:17px;height:16px;background:#cdcdcd;"></div>
<svg style="left:612.5px;top:682px" width="8" height="8" viewBox="0 0 8 8"><path d="M5.4 0.9 L1.5 4 L5.4 7.1" stroke="#505050" stroke-width="1.7" fill="none"/></svg>
<svg style="left:1146px;top:682px" width="8" height="8" viewBox="0 0 8 8"><path d="M1.4 0.9 L5.3 4 L1.4 7.1" stroke="#505050" stroke-width="1.7" fill="none"/></svg>
<div class="a" style="left:608px;top:694px;width:566px;height:1px;background:#c8c8c8;"></div>
<div class="a" style="left:608px;top:695px;width:566px;height:25px;background:#f0f0f0;"></div>
<svg style="left:612px;top:701.5px" width="16" height="14" viewBox="0 0 16 14"><path d="M0.8 1.9 Q4.2 0.1 7.55 2 Q10.9 0.1 14.3 1.9 V12.3 H0.8 Z M7.55 2 V13.5 M0.8 12 Q4.2 9.6 7.55 12 Q10.9 9.6 14.3 12" stroke="#0b4ea2" stroke-width="1.4" fill="none" stroke-linejoin="round"/></svg>
<svg style="left:637px;top:701px" width="13" height="13" viewBox="0 0 13 13"><path d="M0.8 3.4 L2.6 0.7 H10.6 L12.4 3.4 Z" fill="#8fb4de"/><path d="M0.8 3.4 L2.6 0.7 H10.6 L12.4 3.4 V12.3 H0.8 Z M0.8 3.4 H12.4 M5 5.7 H8.1" stroke="#0b4ea2" stroke-width="1.4" fill="none" stroke-linejoin="round"/></svg>
<div class="a" style="left:656px;top:696px;width:23px;height:23px;background:#cecece;border:2px solid #797979;"></div>
<svg style="left:661px;top:700px" width="17" height="18" viewBox="0 0 17 18"><path d="M0.8 1.1 H12.8 L7.9 7.5 V12.6 L5.6 14.8 V7.5 Z" stroke="#0b4ea2" stroke-width="1.45" fill="none" stroke-linejoin="round"/><path d="M10.9 14.4 H16.4 L13.65 17.6 Z" fill="#0b4ea2"/></svg>
<div class="a" style="left:681px;top:697px;width:1px;height:21px;background:#c6c6c6;"></div>
<svg style="left:686px;top:700px" width="15" height="15" viewBox="0 0 15 15"><path d="M7.60 0.30 L7.60 14.70 M13.84 3.90 L1.36 11.10 M13.84 11.10 L1.36 3.90" stroke="#0b4ea2" stroke-width="3.5" fill="none"/><path d="M7.60 1.40 L7.60 13.60 M12.88 4.45 L2.32 10.55 M12.88 10.55 L2.32 4.45" stroke="#f0f0f0" stroke-width="1.3" fill="none"/></svg>
<div class="t" style="top:700.00px;font-size:12.0px;line-height:14px;left:710.18px;color:#0b4ea2;">0</div>
<div class="a" style="left:723px;top:697px;width:1px;height:21px;background:#c6c6c6;"></div>
<div class="t" style="top:700.00px;font-size:12.0px;line-height:14px;letter-spacing:-0.196px;left:729.44px;color:#0b4ea2;">Počet záznamů: 116</div>
<div class="a" style="left:841px;top:697px;width:1px;height:21px;background:#c6c6c6;"></div>
<div class="a" style="left:1122px;top:697px;width:1px;height:21px;background:#c6c6c6;"></div>
<svg style="left:1129px;top:700px" width="13" height="15" viewBox="0 0 13 15"><path d="M12.7 1.9 H1.4 L7 7.55 L1.4 13.2 H12.7" stroke="#0b4ea2" stroke-width="1.5" fill="none" stroke-linejoin="round" stroke-linecap="round"/></svg>
<div class="a" style="left:1148px;top:697px;width:1px;height:21px;background:#c6c6c6;"></div>
<svg style="left:1154px;top:700px" width="16" height="15" viewBox="0 0 16 15"><path d="M1 12.6 L2 9.2 L10.6 0.9 Q11.6 0.3 12.7 1.3 Q13.7 2.4 13 3.4 L4.4 11.8 Z M9.2 2.4 L11.6 4.8" stroke="#0b4ea2" stroke-width="1.3" fill="none" stroke-linejoin="round"/><path d="M2 9.2 L4.4 11.8 L1 12.6" fill="#0b4ea2"/><path d="M7.4 13.9 H14.8" stroke="#0b4ea2" stroke-width="1.5"/></svg>
<!-- bottom checkboxes -->
<div class="a" style="left:601px;top:737px;width:17px;height:17px;background:#ffffe1;border:1px solid #0a4a9c;"></div>
<div class="t" style="top:739.00px;font-size:12.0px;line-height:14px;letter-spacing:0.111px;left:623.64px;color:#0f4ea6;">Nefiltrovat mě...</div>
<div class="a" style="left:778px;top:737px;width:17px;height:17px;background:#0054a6;"></div>
<svg style="left:778px;top:737px" width="17" height="17" viewBox="0 0 17 17"><path d="M3.6 9.4 L7.2 12.4 L13.8 5.4" stroke="#fff" stroke-width="2" fill="none"/></svg>
<div class="t" style="top:739.00px;font-size:12.0px;line-height:14px;letter-spacing:-0.800px;left:801.00px;color:#0f4ea6;">VF</div>
<div class="a" style="left:837px;top:737px;width:17px;height:17px;background:#ffffe1;border:1px solid #0a4a9c;"></div>
<div class="t" style="top:739.00px;font-size:12.0px;line-height:14px;letter-spacing:-0.380px;left:859.44px;color:#0f4ea6;">PZ</div>
<div class="a" style="left:895px;top:737px;width:17px;height:17px;background:#ffffe1;border:1px solid #0a4a9c;"></div>
<div class="t" style="top:739.00px;font-size:12.0px;line-height:14px;letter-spacing:-0.800px;left:917.86px;color:#0f4ea6;">OP</div>
<div class="a" style="left:954px;top:737px;width:17px;height:17px;background:#ffffe1;border:1px solid #0a4a9c;"></div>
<div class="t" style="top:739.00px;font-size:12.0px;line-height:14px;letter-spacing:-0.800px;left:976.64px;color:#0f4ea6;">PF</div>
<div class="a" style="left:1013px;top:737px;width:17px;height:17px;background:#ffffe1;border:1px solid #0a4a9c;"></div>
<div class="t" style="top:739.00px;font-size:12.0px;line-height:14px;letter-spacing:-0.800px;left:1036.10px;color:#0f4ea6;">VZ</div>
<div class="a" style="left:1072px;top:737px;width:17px;height:17px;background:#ffffe1;border:1px solid #0a4a9c;"></div>
<div class="t" style="top:739.00px;font-size:12.0px;line-height:14px;letter-spacing:-0.800px;left:1094.96px;color:#0f4ea6;">OV</div>
<div class="a" style="left:1131px;top:737px;width:17px;height:17px;background:#0054a6;"></div>
<svg style="left:1131px;top:737px" width="17" height="17" viewBox="0 0 17 17"><path d="M3.6 9.4 L7.2 12.4 L13.8 5.4" stroke="#fff" stroke-width="2" fill="none"/></svg>
<div class="t" style="top:739.00px;font-size:12.0px;line-height:14px;letter-spacing:0.780px;left:1153.62px;color:#0f4ea6;">IN</div>
<!-- frame -->
<div class="a" style="left:0px;top:0px;width:1186px;height:1px;background:#555;"></div>
<div class="a" style="left:0px;top:0px;width:1px;height:761px;background:#5a5a5a;"></div>
<div class="a" style="left:0px;top:0px;width:1px;height:26px;background:#0a4060;"></div>
<div class="a" style="left:1185px;top:0px;width:1px;height:761px;background:#5a5a5a;"></div>
<div class="a" style="left:1185px;top:0px;width:1px;height:26px;background:#0a4060;"></div>
<div class="a" style="left:0px;top:760px;width:1186px;height:1px;background:#555;"></div>
</body></html>
